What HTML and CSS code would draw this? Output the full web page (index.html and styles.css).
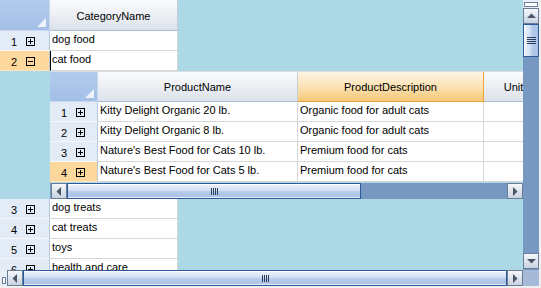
FILE: index.html
```html
<!DOCTYPE html>
<html>
<head>
<meta charset="utf-8">
<link rel="stylesheet" href="styles.css">
</head>
<body>
<div class="dgv">
  <div class="viewport">
    <div class="hrow">
      <div class="corner w-rh"><svg class="tri" width="9" height="9" viewBox="0 0 9 9"><polygon points="9,0 9,9 0,9" fill="#eef3fa"/></svg></div>
      <div class="colhdr w-cat">CategoryName</div>
    </div>
    <div class="row">
      <div class="rh w-rh"><span class="num">1</span><svg class="box" width="9" height="9" viewBox="0 0 9 9"><rect x="0.5" y="0.5" width="8" height="8" fill="none" stroke="#000"/><path d="M2 4.5H7M4.5 2V7" stroke="#000"/></svg></div>
      <div class="cell w-cat">dog food</div>
    </div>
    <div class="row">
      <div class="rh w-rh sel"><span class="num">2</span><svg class="box" width="9" height="9" viewBox="0 0 9 9"><rect x="0.5" y="0.5" width="8" height="8" fill="none" stroke="#000"/><path d="M2 4.5H7" stroke="#000"/></svg></div>
      <div class="cell w-cat cur">cat food</div>
    </div>

    <div class="nested">
      <div class="nhrow">
        <div class="corner w-nrh"><svg class="tri" width="9" height="9" viewBox="0 0 9 9"><polygon points="9,0 9,9 0,9" fill="#eef3fa"/></svg></div>
        <div class="colhdr w-pn">ProductName</div>
        <div class="colhdr w-pd hot">ProductDescription</div>
        <div class="colhdr w-up">UnitPrice</div>
      </div>
      <div class="row">
        <div class="rh w-nrh"><span class="num">1</span><svg class="box" width="9" height="9" viewBox="0 0 9 9"><rect x="0.5" y="0.5" width="8" height="8" fill="none" stroke="#000"/><path d="M2 4.5H7M4.5 2V7" stroke="#000"/></svg></div>
        <div class="cell w-pn">Kitty Delight Organic 20 lb.</div>
        <div class="cell w-pd">Organic food for adult cats</div>
        <div class="cell w-up"></div>
      </div>
      <div class="row">
        <div class="rh w-nrh"><span class="num">2</span><svg class="box" width="9" height="9" viewBox="0 0 9 9"><rect x="0.5" y="0.5" width="8" height="8" fill="none" stroke="#000"/><path d="M2 4.5H7M4.5 2V7" stroke="#000"/></svg></div>
        <div class="cell w-pn">Kitty Delight Organic 8 lb.</div>
        <div class="cell w-pd">Organic food for adult cats</div>
        <div class="cell w-up"></div>
      </div>
      <div class="row">
        <div class="rh w-nrh"><span class="num">3</span><svg class="box" width="9" height="9" viewBox="0 0 9 9"><rect x="0.5" y="0.5" width="8" height="8" fill="none" stroke="#000"/><path d="M2 4.5H7M4.5 2V7" stroke="#000"/></svg></div>
        <div class="cell w-pn">Nature's Best Food for Cats 10 lb.</div>
        <div class="cell w-pd">Premium food for cats</div>
        <div class="cell w-up"></div>
      </div>
      <div class="row">
        <div class="rh w-nrh sel"><span class="num">4</span><svg class="box" width="9" height="9" viewBox="0 0 9 9"><rect x="0.5" y="0.5" width="8" height="8" fill="none" stroke="#000"/><path d="M2 4.5H7M4.5 2V7" stroke="#000"/></svg></div>
        <div class="cell w-pn">Nature's Best Food for Cats 5 lb.</div>
        <div class="cell w-pd">Premium food for cats</div>
        <div class="cell w-up"></div>
      </div>
      <div class="hbar nbar">
        <div class="btn hbtn"><svg width="6" height="9" viewBox="0 0 6 9"><polygon points="5,0 5,9 0.5,4.5" fill="#4c5566"/></svg></div>
        <div class="thumb hthumb nthumb"><span class="grip"></span></div>
        <div class="track"></div>
        <div class="btn hbtn"><svg width="6" height="9" viewBox="0 0 6 9"><polygon points="1,0 1,9 5.5,4.5" fill="#4c5566"/></svg></div>
      </div>
    </div>

    <div class="row">
      <div class="rh w-rh"><span class="num">3</span><svg class="box" width="9" height="9" viewBox="0 0 9 9"><rect x="0.5" y="0.5" width="8" height="8" fill="none" stroke="#000"/><path d="M2 4.5H7M4.5 2V7" stroke="#000"/></svg></div>
      <div class="cell w-cat">dog treats</div>
    </div>
    <div class="row">
      <div class="rh w-rh"><span class="num">4</span><svg class="box" width="9" height="9" viewBox="0 0 9 9"><rect x="0.5" y="0.5" width="8" height="8" fill="none" stroke="#000"/><path d="M2 4.5H7M4.5 2V7" stroke="#000"/></svg></div>
      <div class="cell w-cat">cat treats</div>
    </div>
    <div class="row">
      <div class="rh w-rh"><span class="num">5</span><svg class="box" width="9" height="9" viewBox="0 0 9 9"><rect x="0.5" y="0.5" width="8" height="8" fill="none" stroke="#000"/><path d="M2 4.5H7M4.5 2V7" stroke="#000"/></svg></div>
      <div class="cell w-cat">toys</div>
    </div>
    <div class="row">
      <div class="rh w-rh"><span class="num">6</span><svg class="box" width="9" height="9" viewBox="0 0 9 9"><rect x="0.5" y="0.5" width="8" height="8" fill="none" stroke="#000"/><path d="M2 4.5H7M4.5 2V7" stroke="#000"/></svg></div>
      <div class="cell w-cat">health and care</div>
    </div>
  </div>

  <div class="vbar">
    <div class="vsplit"><span></span></div>
    <div class="btn vbtn"><svg width="9" height="6" viewBox="0 0 9 6"><polygon points="0,5 9,5 4.5,0.5" fill="#4c5566"/></svg></div>
    <div class="thumb vthumb"><span class="vgrip"></span></div>
    <div class="track"></div>
    <div class="btn vbtn"><svg width="9" height="6" viewBox="0 0 9 6"><polygon points="0,1 9,1 4.5,5.5" fill="#4c5566"/></svg></div>
  </div>

  <div class="hbar mbar">
    <div class="hsplit"><span></span></div>
    <div class="btn hbtn"><svg width="6" height="9" viewBox="0 0 6 9"><polygon points="5,0 5,9 0.5,4.5" fill="#4c5566"/></svg></div>
    <div class="thumb hthumb mthumb"><span class="grip"></span></div>
    <div class="btn hbtn"><svg width="6" height="9" viewBox="0 0 6 9"><polygon points="1,0 1,9 5.5,4.5" fill="#4c5566"/></svg></div>
  </div>
  <div class="sizer"></div>
</div>
</body>
</html>
```

FILE: styles.css
```css
* { box-sizing: border-box; }
html, body { margin: 0; padding: 0; }
body {
  background: #f0f0f0;
  font-family: "Liberation Sans", Arial, sans-serif;
  font-size: 11px;
  color: #000;
}
.dgv {
  width: 539px;
  height: 286px;
  display: grid;
  grid-template-columns: 523px 16px;
  grid-template-rows: 270px 16px;
}
.viewport {
  background: #add8e6;
  overflow: hidden;
  display: flex;
  flex-direction: column;
}
.hrow { display: flex; height: 31px; flex-shrink: 0; }
.row { display: flex; height: 20px; flex-shrink: 0; }
.w-rh { width: 50px; }
.w-nrh { width: 48px; }
.w-cat { width: 128px; }
.w-pn { width: 200px; }
.w-pd { width: 186px; }
.w-up { width: 85px; }

.corner {
  flex-shrink: 0;
  background: linear-gradient(#b3cbed, #a3bfe7);
  border-right: 1px solid #c9d8ee;
  border-bottom: 1px solid #c9d8ee;
  display: flex;
  justify-content: flex-end;
  align-items: flex-end;
  padding: 0 3px 3px 0;
}
.colhdr {
  flex-shrink: 0;
  background: linear-gradient(#fafbfd, #eceff4 50%, #dce2eb);
  border-right: 1px solid #c5cdd8;
  border-bottom: 1px solid #aebccd;
  display: flex;
  align-items: center;
  justify-content: center;
  padding-top: 1px;
  white-space: nowrap;
  overflow: hidden;
}
.colhdr.hot {
  background: linear-gradient(#fef5e4, #fbe2b4 50%, #f5c878);
  border-right: 1px solid #f0a43e;
  border-bottom: 1px solid #f0a43e;
}
.rh {
  flex-shrink: 0;
  background: #e3ebf6;
  border-right: 1px solid #b7c7dc;
  border-bottom: 1px solid #f6f8fc;
  display: flex;
  align-items: center;
}
.rh.sel { background: #fdd89c; border-bottom-color: #fde6bd; }
.num { width: 17px; text-align: right; line-height: 13px; padding-top: 3px; }
.box { margin-left: 9px; margin-top: 1px; }
.cell {
  flex-shrink: 0;
  background: #fff;
  border-right: 1px solid #d6d6d6;
  border-bottom: 1px solid #d6d6d6;
  padding: 2px 0 0 2px;
  line-height: 13px;
  white-space: nowrap;
  overflow: hidden;
}
.cell.cur { border-left: 1px solid #000; padding-left: 1px; }

.nested {
  margin-left: 50px;
  width: 473px;
  height: 128px;
  flex-shrink: 0;
  overflow: hidden;
  display: flex;
  flex-direction: column;
}
.nhrow {
  display: flex;
  height: 31px;
  flex-shrink: 0;
  border-top: 1px solid #d8dde4;
}

/* scrollbars */
.track { flex: 1; background: #7698c1; }
.btn {
  flex-shrink: 0;
  width: 16px;
  height: 16px;
  border: 1px solid #6a7d99;
  background: linear-gradient(#f6f8fb, #dfe5ee 50%, #c8d2e0);
  display: flex;
  align-items: center;
  justify-content: center;
}
.thumb {
  flex-shrink: 0;
  border: 1px solid #2e5a9c;
  display: flex;
  align-items: center;
  justify-content: center;
}
.hthumb {
  height: 16px;
  background: linear-gradient(#eef3fb, #d3e0f3 45%, #b7cbea 55%, #a9c1e5);
  box-shadow: inset 0 1px 0 #fff, inset 0 -1px 0 #e4ecf8;
}
.grip {
  width: 7px;
  height: 7px;
  background: repeating-linear-gradient(90deg, #2b3d5c 0 1px, transparent 1px 2px);
}
.hbar { display: flex; background: #7698c1; height: 16px; }
.mbar { grid-column: 1; grid-row: 2; }
.nbar { height: 16px; flex-shrink: 0; margin-top: 1px; padding-left: 1px; }
.nthumb { width: 294px; }
.mthumb { flex: 1; }
.hsplit {
  width: 7px;
  flex-shrink: 0;
  background: #e9eef6;
  display: flex;
  align-items: center;
  justify-content: center;
  padding-top: 5px;
}
.hsplit span {
  width: 4px;
  height: 7px;
  border: 1px solid #6a7d99;
  background: #fff;
}
.vbar {
  grid-column: 2;
  grid-row: 1;
  display: flex;
  flex-direction: column;
  background: #7698c1;
  padding-bottom: 1px;
}
.vsplit {
  height: 8px;
  flex-shrink: 0;
  background: #e9eef6;
  display: flex;
  justify-content: center;
  padding-top: 2px;
}
.vsplit span {
  width: 14px;
  height: 5px;
  border: 1px solid #6a7d99;
  background: #fff;
}
.vbtn { width: 16px; }
.vthumb {
  width: 16px;
  height: 33px;
  background: linear-gradient(90deg, #eef3fb, #d3e0f3 45%, #b7cbea 55%, #a9c1e5);
  box-shadow: inset 1px 0 0 #fff;
}
.vgrip {
  width: 9px;
  height: 7px;
  background: repeating-linear-gradient(180deg, #2b3d5c 0 1px, transparent 1px 2px);
}
.sizer { grid-column: 2; grid-row: 2; background: #a6b9d6; }
```
